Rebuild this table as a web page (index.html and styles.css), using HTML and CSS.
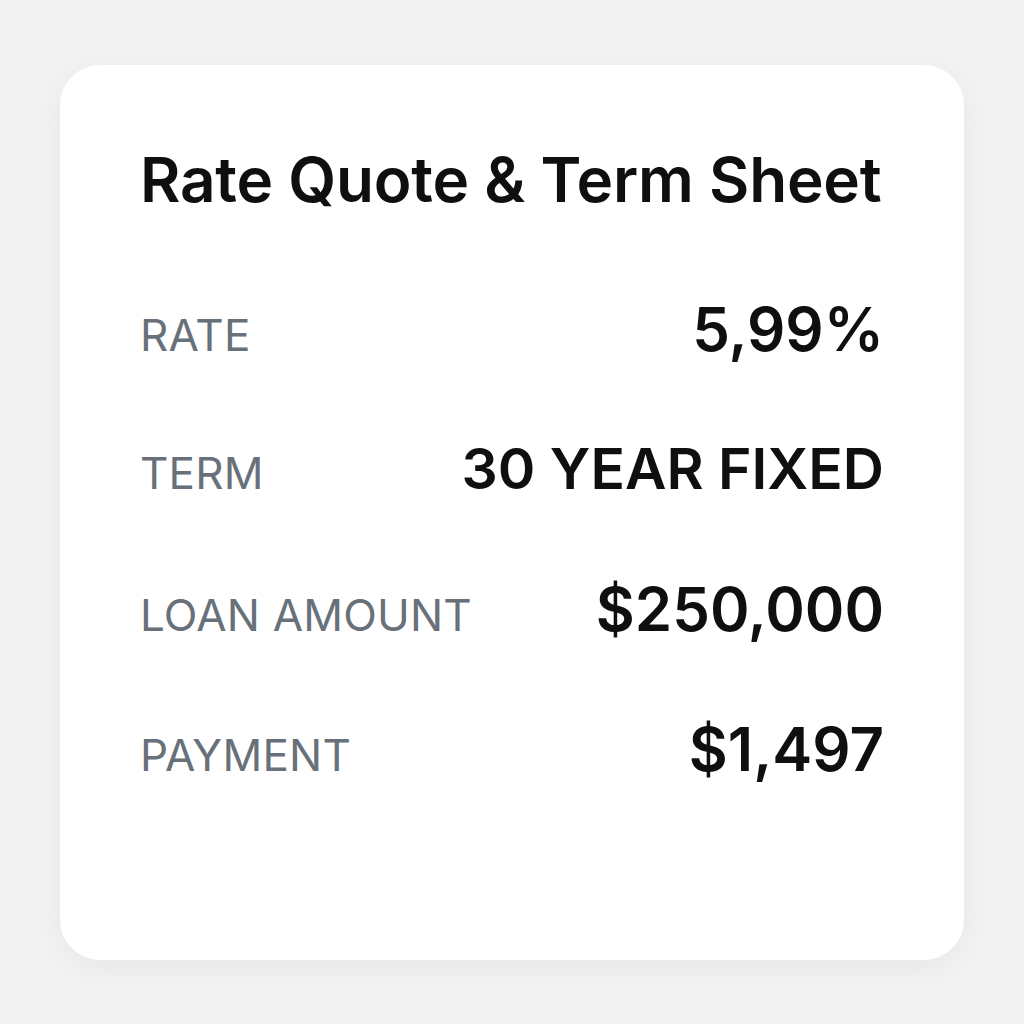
FILE: index.html
```html
<!DOCTYPE html>
<html lang="en">
<head>
<meta charset="utf-8">
<title>Rate Quote &amp; Term Sheet</title>
<link rel="stylesheet" href="styles.css">
</head>
<body>
<main class="card">
  <h1 class="title">Rate Quote &amp; Term Sheet</h1>
  <div class="rows">
    <div class="row">
      <span class="label">RATE</span>
      <span class="value">5,99%</span>
    </div>
    <div class="row">
      <span class="label">TERM</span>
      <span class="value value-text">30 YEAR FIXED</span>
    </div>
    <div class="row">
      <span class="label">LOAN AMOUNT</span>
      <span class="value">$250,000</span>
    </div>
    <div class="row">
      <span class="label">PAYMENT</span>
      <span class="value">$1,497</span>
    </div>
  </div>
</main>
</body>
</html>
```
FILE: styles.css
```css
html, body {
  margin: 0;
  padding: 0;
}
body {
  width: 1024px;
  height: 1024px;
  background: #f3f3f3;
  font-family: Inter, "Noto Sans", "Liberation Sans", sans-serif;
  padding: 65px 60px 64px 60px;
  box-sizing: border-box;
}
.card {
  background: #ffffff;
  border-radius: 40px;
  box-shadow: 0 8px 36px rgba(0, 0, 0, 0.06);
  height: 895px;
  box-sizing: border-box;
  padding: 79px 80px 0 80px;
}
.title {
  margin: 0;
  font-size: 62px;
  line-height: 72px;
  font-weight: 560;
  color: #0e0f11;
  letter-spacing: -0.2px;
  white-space: nowrap;
}
.rows {
  margin-top: 81px;
  display: flex;
  flex-direction: column;
}
.row {
  height: 140px;
  display: flex;
  justify-content: space-between;
  align-items: baseline;
}
.label {
  font-size: 44px;
  line-height: 64px;
  font-weight: 400;
  color: #687079;
  letter-spacing: 0.2px;
}
.value {
  font-size: 60px;
  line-height: 64px;
  font-weight: 560;
  color: #0e0f11;
}
.value-text {
  font-size: 57px;
}
```
